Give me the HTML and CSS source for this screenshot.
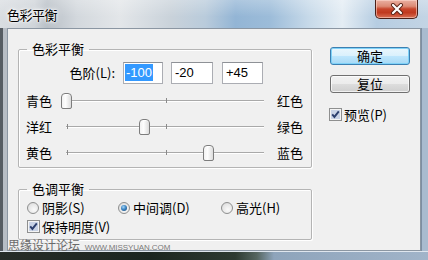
FILE: index.html
```html
<!DOCTYPE html>
<html lang="zh-CN">
<head>
<meta charset="utf-8">
<title>色彩平衡</title>
<link rel="stylesheet" href="styles.css">
</head>
<body>
<div class="window">
  <div class="titlebar">
    <span class="title">色彩平衡</span>
    <div class="close">
      <svg width="14" height="12" viewBox="0 0 14 12">
        <path d="M3 2 L11 10 M11 2 L3 10" stroke="#5a2418" stroke-width="4" stroke-linecap="round"/>
        <path d="M3 2 L11 10 M11 2 L3 10" stroke="#ffffff" stroke-width="2.2" stroke-linecap="round"/>
      </svg>
    </div>
  </div>
  <div class="middle">
    <div class="edge-l"></div>
    <div class="client">
      <div class="left-col">
        <fieldset class="group g1">
          <legend>色彩平衡</legend>
          <div class="levels">
            <span class="lbl">色阶(L):</span>
            <div class="field f1"><span class="sel">-100</span></div>
            <div class="field f2">-20</div>
            <div class="field f3">+45</div>
          </div>
          <div class="slider-row">
            <span>青色</span>
            <div class="track"><i class="line"></i><i class="tick t0"></i><i class="tick tc"></i><span class="thumb" style="left:0px"></span></div>
            <span>红色</span>
          </div>
          <div class="slider-row">
            <span>洋红</span>
            <div class="track"><i class="line"></i><i class="tick t0"></i><i class="tick tc"></i><span class="thumb" style="left:78px"></span></div>
            <span>绿色</span>
          </div>
          <div class="slider-row">
            <span>黄色</span>
            <div class="track"><i class="line"></i><i class="tick t0"></i><i class="tick tc"></i><span class="thumb" style="left:142px"></span></div>
            <span>蓝色</span>
          </div>
        </fieldset>
        <fieldset class="group g2">
          <legend>色调平衡</legend>
          <div class="radios">
            <span class="opt"><i class="radio"></i>阴影(S)</span>
            <span class="opt"><i class="radio on"></i>中间调(D)</span>
            <span class="opt"><i class="radio"></i>高光(H)</span>
          </div>
          <div class="check">
            <svg class="cb" width="13" height="13" viewBox="0 0 13 13"><rect x="0.5" y="0.5" width="12" height="12" fill="#f4f4f4" stroke="#8e8f8f"/><rect x="2" y="2" width="9" height="9" fill="#c9d3e6"/><path d="M3.2 6.4 L5.4 8.9 L9.8 3.4" fill="none" stroke="#2c3f6e" stroke-width="1.9"/></svg>
            <span>保持明度(V)</span>
          </div>
        </fieldset>
      </div>
      <div class="right-col">
        <div class="btn default">确定</div>
        <div class="btn">复位</div>
        <div class="check preview">
          <svg class="cb" width="13" height="13" viewBox="0 0 13 13"><rect x="0.5" y="0.5" width="12" height="12" fill="#f4f4f4" stroke="#8e8f8f"/><rect x="2" y="2" width="9" height="9" fill="#c9d3e6"/><path d="M3.2 6.4 L5.4 8.9 L9.8 3.4" fill="none" stroke="#2c3f6e" stroke-width="1.9"/></svg>
          <span>预览(P)</span>
        </div>
      </div>
    </div>
    <div class="edge-r"></div>
  </div>
  <div class="bottom-frame"></div>
  <div class="watermark">思缘设计论坛 <span class="url">WWW.MISSYUAN.COM</span></div>
</div>
</body>
</html>
```
FILE: styles.css
```css
html, body {
  margin: 0;
  padding: 0;
}
body {
  width: 428px;
  height: 260px;
  overflow: hidden;
  font-family: "Noto Sans CJK SC", "Noto Sans", sans-serif;
  font-size: 13px;
  line-height: 16px;
  color: #000;
}
.window {
  position: relative;
  width: 428px;
  height: 260px;
  display: flex;
  flex-direction: column;
}
.titlebar {
  height: 28px;
  flex: none;
  display: flex;
  justify-content: space-between;
  align-items: flex-start;
  padding-left: 7px;
  background:
    linear-gradient(180deg, rgba(255,255,255,0.25), rgba(255,255,255,0) 60%),
    linear-gradient(90deg, #d9dde1 0, #cfd4d9 8%, #b8bfc6 11%, #d3d8dd 18%, #e3e6e9 28%, #c9d2da 40%, #b9cbdb 48%, #93b5d5 55%, #9cbcd9 63%, #c6d9e9 72%, #e4edf4 80%, #b6cde2 88%, #c3d4e4 100%);
}
.title {
  font-size: 13px;
  line-height: 14px;
  margin-top: 8px;
  letter-spacing: -0.5px;
  text-shadow: 0 0 6px #fff, 0 0 3px #fff, 0 0 2px #fff;
}
.close {
  width: 43px;
  height: 19px;
  margin-right: 10px;
  box-sizing: border-box;
  border: 1px solid #4a1f18;
  border-top: none;
  border-radius: 0 0 5px 5px;
  background: linear-gradient(180deg, #eab0a2 0, #dc8a74 35%, #c7452b 50%, #c0391f 70%, #d87055 100%);
  box-shadow: inset 0 0 0 1px rgba(255,220,210,0.55);
  display: flex;
  align-items: center;
  justify-content: center;
}
.close svg { display: block; }
.middle {
  flex: 1;
  display: flex;
  min-height: 0;
}
.edge-l {
  width: 7px;
  flex: none;
  background: linear-gradient(90deg, #565c62 0 3px, #b7bdc4 3px 7px);
}
.edge-r {
  width: 7px;
  flex: none;
  background: linear-gradient(90deg, #7d8ea2 0 1px, #a9bbcf 1px);
}
.client {
  flex: 1;
  box-sizing: border-box;
  border: 1px solid #8b96a2;
  background: #f0f0f0;
  display: flex;
  padding: 12px 0 0 10px;
}
.bottom-frame {
  height: 9px;
  flex: none;
  background: linear-gradient(90deg, #262c28 0, #1c2620 35%, #2d3a31 55%, #55655f 60%, #8ea4bb 64%, #a1b4c9 100%);
  border-top: 1px solid #dfe6ee;
  box-sizing: border-box;
}
.left-col {
  width: 294px;
  flex: none;
}
.group {
  box-sizing: border-box;
  width: 294px;
  margin: 0;
  border: 1px solid #b4b4b4;
  border-radius: 2px;
  box-shadow: 1px 1px 0 #fff, inset 1px 1px 0 #fff;
  padding: 5px 0 1px 7px;
  min-width: 0;
}
.group legend {
  padding: 0 5px;
  margin-left: 1px;
  font-size: 13px;
  line-height: 16px;
}
.levels {
  display: flex;
  align-items: center;
  height: 22px;
}
.lbl {
  width: 89px;
  text-align: right;
  margin-right: 8px;
}
.field {
  box-sizing: border-box;
  height: 22px;
  background: #fff;
  border: 1px solid #abadb3;
  border-top-color: #8e9196;
  font-family: "Liberation Sans", Arial, sans-serif;
  font-size: 13px;
  line-height: 20px;
  padding-left: 3px;
}
.f1 { width: 40px; margin-right: 8px; padding-left: 1px; }
.f2 { width: 42px; margin-right: 9px; }
.f3 { width: 41px; }
.sel {
  background: #3399ff;
  color: #fff;
  padding: 1px 1px;
}
.slider-row {
  display: grid;
  grid-template-columns: 26px 207px auto;
  column-gap: 9px;
  align-items: center;
  height: 26px;
}
.levels + .slider-row { margin-top: 4px; }
.track {
  position: relative;
  height: 26px;
}
.line {
  position: absolute;
  left: 5px;
  right: 4px;
  top: 12px;
  height: 1px;
  background: #a9a9a9;
  border-bottom: 1px solid #fff;
}
.tick {
  position: absolute;
  width: 1px;
  height: 5px;
  top: 10px;
  background: #8a8a8a;
}
.t0 { left: 6px; }
.tc { left: 105px; }
.thumb {
  position: absolute;
  top: 5px;
  width: 11px;
  height: 16px;
  box-sizing: border-box;
  border: 1px solid #7d7d7d;
  border-radius: 4px 4px 2px 2px;
  background: linear-gradient(90deg, #f2f2f2, #fdfdfd 40%, #dcdcdc);
  box-shadow: inset 0 1px 0 #fff;
}
.g2 {
  margin-top: 13px;
  padding-top: 1px;
  padding-bottom: 3px;
}
.radios {
  display: grid;
  grid-template-columns: 91px 103px auto;
  height: 19px;
  line-height: 19px;
  align-items: center;
  padding-left: 1px;
}
.opt {
  display: flex;
  align-items: center;
}
.radio {
  width: 12px;
  height: 12px;
  box-sizing: border-box;
  border-radius: 50%;
  border: 1px solid #8e8f8f;
  background: radial-gradient(circle at 60% 65%, #fafafa 0, #e6e6e6 60%, #cfcfcf 100%);
  margin-right: 3px;
  position: relative;
}
.radio.on::after {
  content: "";
  position: absolute;
  left: 2px;
  top: 2px;
  width: 6px;
  height: 6px;
  border-radius: 50%;
  background: radial-gradient(circle at 40% 35%, #a6d6f7 0, #3e86c4 45%, #12406e 100%);
}
.check {
  display: flex;
  align-items: center;
  height: 19px;
  line-height: 19px;
  padding-left: 1px;
}
.cb {
  display: block;
  margin-right: 2px;
}
.right-col {
  margin-left: 18px;
  margin-top: 6px;
  width: 80px;
}
.btn {
  box-sizing: border-box;
  width: 80px;
  height: 18px;
  border: 1px solid #707070;
  border-radius: 3px;
  background: linear-gradient(180deg, #f2f2f2 0, #ebebeb 50%, #dddddd 51%, #cfcfcf 100%);
  box-shadow: inset 0 0 0 1px rgba(255,255,255,0.7);
  text-align: center;
  font-size: 13px;
  line-height: 16px;
  margin-bottom: 10px;
}
.btn.default {
  border-color: #3c7fb1;
  background: linear-gradient(180deg, #eaf6fd 0, #d9f0fc 50%, #bee6fd 51%, #a7d9f5 100%);
  box-shadow: inset 0 0 0 1px #7fd2f8;
}
.preview {
  margin-top: 12px;
  margin-left: -1px;
  padding-left: 0;
}
.watermark {
  position: absolute;
  left: 8px;
  top: 238px;
  font-size: 12px;
  line-height: 14px;
  color: #6a6a6a;
  white-space: nowrap;
}
.url {
  font-family: "Liberation Sans", Arial, sans-serif;
  font-size: 8px;
  letter-spacing: -0.1px;
  color: #7a7a7a;
  margin-left: 2px;
}
```
